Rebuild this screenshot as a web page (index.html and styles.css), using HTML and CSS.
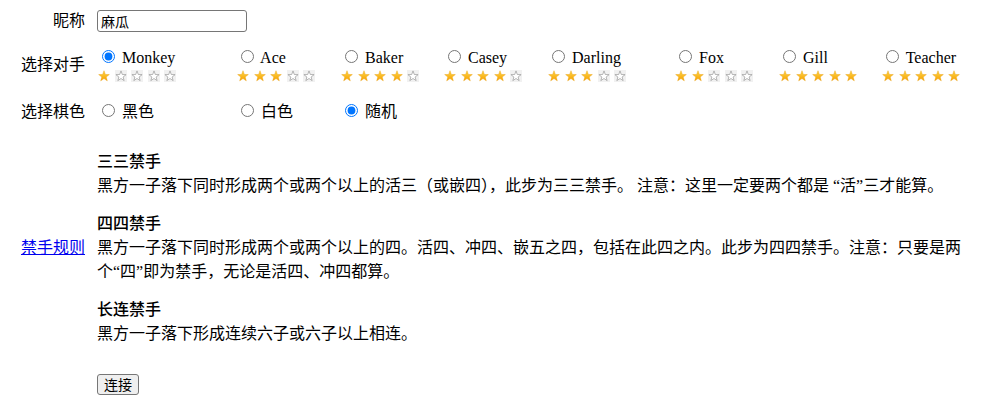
FILE: index.html
```html
<!DOCTYPE html>
<html lang="zh-CN">
<head>
<meta charset="utf-8">
<title>五子棋</title>
<link rel="stylesheet" href="styles.css">
</head>
<body>
<svg class="defs" width="0" height="0" aria-hidden="true">
  <defs>
    <linearGradient id="gold" x1="0" y1="0" x2="0" y2="1">
      <stop offset="0" stop-color="#ffd84a"/>
      <stop offset="1" stop-color="#f5a000"/>
    </linearGradient>
    <symbol id="star-full" viewBox="0 0 12 12">
      <path d="M6 0.7 L7.35 4.44 L11.33 4.57 L8.19 7.01 L9.29 10.83 L6 8.6 L2.71 10.83 L3.81 7.01 L0.67 4.57 L4.65 4.44 Z" fill="url(#gold)" stroke="#e89a00" stroke-width="0.4" stroke-linejoin="round"/>
    </symbol>
    <symbol id="star-empty" viewBox="0 0 12 12">
      <rect x="0" y="0" width="12" height="12" fill="#f1f1f1"/>
      <path d="M6 0.9 L7.3 4.5 L11.1 4.65 L8.1 7.0 L9.15 10.6 L6 8.5 L2.85 10.6 L3.9 7.0 L0.9 4.65 L4.7 4.5 Z" fill="#fff" stroke="#9a9a9a" stroke-width="0.7" stroke-linejoin="round"/>
    </symbol>
  </defs>
</svg>
<form class="form">
  <div class="row row-name">
    <label class="label" for="nick">昵称</label>
    <div class="field"><input id="nick" class="nick" type="text" value="麻瓜"></div>
  </div>

  <div class="row row-opp">
    <span class="label">选择对手</span>
    <div class="opts">
      <div class="opt">
        <label class="radio"><input type="radio" name="opp" checked> Monkey</label>
        <div class="stars"><svg class="star"><use href="#star-full"/></svg><svg class="star"><use href="#star-empty"/></svg><svg class="star"><use href="#star-empty"/></svg><svg class="star"><use href="#star-empty"/></svg><svg class="star"><use href="#star-empty"/></svg></div>
      </div>
      <div class="opt">
        <label class="radio"><input type="radio" name="opp"> Ace</label>
        <div class="stars"><svg class="star"><use href="#star-full"/></svg><svg class="star"><use href="#star-full"/></svg><svg class="star"><use href="#star-full"/></svg><svg class="star"><use href="#star-empty"/></svg><svg class="star"><use href="#star-empty"/></svg></div>
      </div>
      <div class="opt">
        <label class="radio"><input type="radio" name="opp"> Baker</label>
        <div class="stars"><svg class="star"><use href="#star-full"/></svg><svg class="star"><use href="#star-full"/></svg><svg class="star"><use href="#star-full"/></svg><svg class="star"><use href="#star-full"/></svg><svg class="star"><use href="#star-empty"/></svg></div>
      </div>
      <div class="opt">
        <label class="radio"><input type="radio" name="opp"> Casey</label>
        <div class="stars"><svg class="star"><use href="#star-full"/></svg><svg class="star"><use href="#star-full"/></svg><svg class="star"><use href="#star-full"/></svg><svg class="star"><use href="#star-full"/></svg><svg class="star"><use href="#star-empty"/></svg></div>
      </div>
      <div class="opt">
        <label class="radio"><input type="radio" name="opp"> Darling</label>
        <div class="stars"><svg class="star"><use href="#star-full"/></svg><svg class="star"><use href="#star-full"/></svg><svg class="star"><use href="#star-full"/></svg><svg class="star"><use href="#star-empty"/></svg><svg class="star"><use href="#star-empty"/></svg></div>
      </div>
      <div class="opt">
        <label class="radio"><input type="radio" name="opp"> Fox</label>
        <div class="stars"><svg class="star"><use href="#star-full"/></svg><svg class="star"><use href="#star-full"/></svg><svg class="star"><use href="#star-empty"/></svg><svg class="star"><use href="#star-empty"/></svg><svg class="star"><use href="#star-empty"/></svg></div>
      </div>
      <div class="opt">
        <label class="radio"><input type="radio" name="opp"> Gill</label>
        <div class="stars"><svg class="star"><use href="#star-full"/></svg><svg class="star"><use href="#star-full"/></svg><svg class="star"><use href="#star-full"/></svg><svg class="star"><use href="#star-full"/></svg><svg class="star"><use href="#star-full"/></svg></div>
      </div>
      <div class="opt">
        <label class="radio"><input type="radio" name="opp"> Teacher</label>
        <div class="stars"><svg class="star"><use href="#star-full"/></svg><svg class="star"><use href="#star-full"/></svg><svg class="star"><use href="#star-full"/></svg><svg class="star"><use href="#star-full"/></svg><svg class="star"><use href="#star-full"/></svg></div>
      </div>
    </div>
  </div>

  <div class="row row-color">
    <span class="label">选择棋色</span>
    <div class="opts">
      <label class="radio"><input type="radio" name="color"> 黑色</label>
      <label class="radio"><input type="radio" name="color"> 白色</label>
      <label class="radio"><input type="radio" name="color" checked> 随机</label>
    </div>
  </div>

  <div class="row row-rules">
    <span class="label"><a href="#" class="link">禁手规则</a></span>
    <div class="rules">
      <dl class="rule">
        <dt>三三禁手</dt>
        <dd>黑方一子落下同时形成两个或两个以上的活三（或嵌四），此步为三三禁手。 注意：这里一定要两个都是 “活”三才能算。</dd>
      </dl>
      <dl class="rule">
        <dt>四四禁手</dt>
        <dd>黑方一子落下同时形成两个或两个以上的四。活四、冲四、嵌五之四，包括在此四之内。此步为四四禁手。注意：只要是两个“四”即为禁手，无论是活四、冲四都算。</dd>
      </dl>
      <dl class="rule">
        <dt>长连禁手</dt>
        <dd>黑方一子落下形成连续六子或六子以上相连。</dd>
      </dl>
    </div>
  </div>

  <div class="row row-submit">
    <span class="label"></span>
    <div><button type="button" class="btn">连接</button></div>
  </div>
</form>
</body>
</html>
```

FILE: styles.css
```css
html, body {
  background: #ffffff;
}
body {
  margin: 8px;
  color: #000;
  font-family: "Liberation Serif", "Noto Sans CJK SC", serif;
  font-size: 16px;
}
.defs {
  position: absolute;
  width: 0;
  height: 0;
  overflow: hidden;
}
.form {
  padding-left: 11px;
}
.row {
  display: grid;
  grid-template-columns: 66px 1fr;
  column-gap: 12px;
  align-items: center;
}
.label {
  text-align: right;
  line-height: 20px;
  white-space: nowrap;
}
.row-name {
  height: 26px;
}
.nick {
  box-sizing: border-box;
  width: 150px;
  height: 22px;
  margin: 0;
  padding: 0 3px;
  border: 1px solid #767676;
  border-radius: 3px;
  font-family: "Noto Sans CJK SC", sans-serif;
  font-size: 14px;
  color: #000;
  background: #fff;
}
.row-opp {
  margin-top: 13px;
}
.opts {
  display: grid;
  grid-template-columns: 139px 104px 103px 104px 127px 104px 103px auto;
}
.opt {
  display: flex;
  flex-direction: column;
}
.radio {
  line-height: 20px;
  white-space: nowrap;
}
.radio input {
  margin: 3px 3px 0 5px;
}
.stars {
  display: flex;
  align-items: center;
  height: 15px;
  padding-left: 1px;
  gap: 4.6px;
}
.star {
  width: 12px;
  height: 12px;
  display: block;
}
.row-color {
  margin-top: 18px;
}
.row-rules {
  margin-top: 28px;
}
.rules {
  line-height: 24px;
}
.rule {
  margin: 14px 0 0;
}
.rule:first-child {
  margin-top: 0;
}
.rule dt {
  font-weight: 500;
}
.rule dd {
  margin: 0;
}
.link {
  color: #0000ee;
  text-decoration: underline;
}
.row-submit {
  margin-top: 28px;
}
.btn {
  box-sizing: border-box;
  width: 42px;
  height: 21px;
  margin: 0;
  padding: 0;
  border: 1px solid #767676;
  border-radius: 3px;
  background: #efefef;
  font-family: "Noto Sans CJK SC", sans-serif;
  font-size: 14px;
  line-height: 19px;
  color: #000;
}
```
